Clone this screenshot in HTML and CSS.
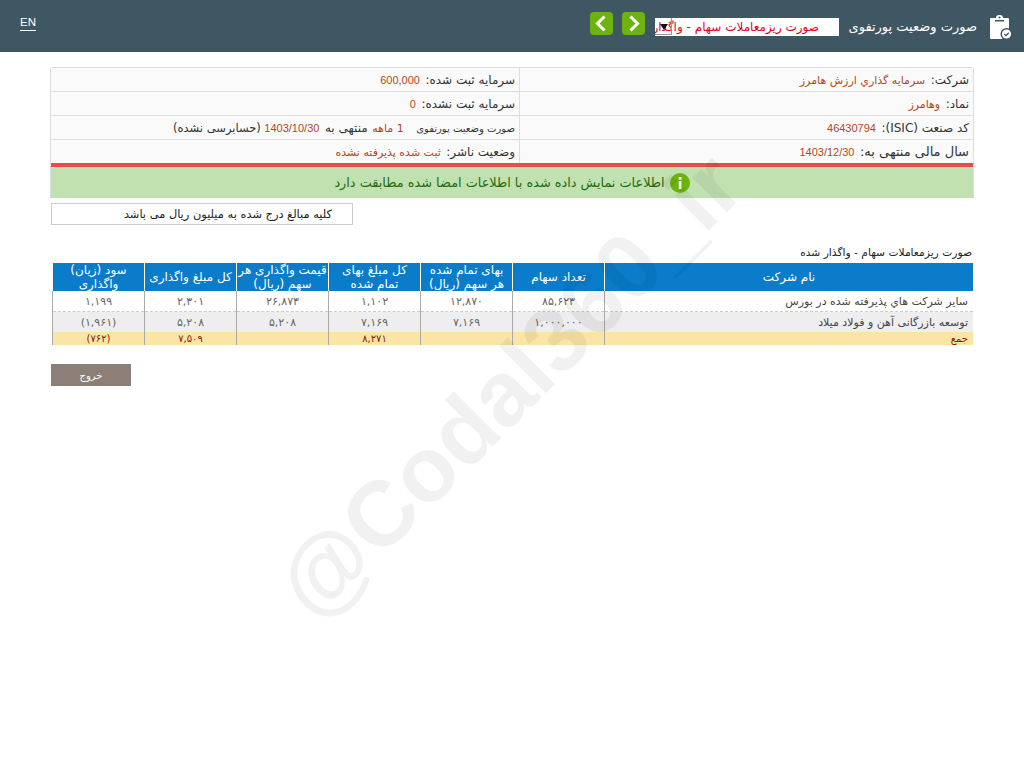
FILE: index.html
```html
<!DOCTYPE html>
<html lang="fa" dir="rtl">

<head>
    <meta charset="UTF-8">
    <title>صورت وضعیت پورتفوی</title>
    <link rel="stylesheet" href="styles.css">
</head>

<body>
    <header class="topbar">
        <svg class="report-icon" width="24" height="26" viewBox="0 0 24 26">
            <path fill="#fff" d="M2 4h5V3a3 3 0 0 1 3-2h1a3 3 0 0 1 3 2v1h5a1 1 0 0 1 1 1v19a1 1 0 0 1-1 1H2a1 1 0 0 1-1-1V5a1 1 0 0 1 1-1z"/>
            <rect x="6" y="6" width="9" height="1.5" fill="#3f5663"/>
            <circle cx="10.5" cy="3.5" r="1" fill="#3f5663"/>
            <circle cx="17.5" cy="20" r="6" fill="#3f5663"/>
            <circle cx="17.5" cy="20" r="4.6" fill="#fff"/>
            <path d="M15.4 20l1.6 1.6 2.8-2.9" fill="none" stroke="#3f5663" stroke-width="1.3"/>
        </svg>
        <span class="report-title">صورت وضعیت پورتفوی</span>
        <div class="report-select">
            <span class="report-select-text">صورت ریزمعاملات سهام - واگذار شده</span>
            <span class="report-select-arrow"></span>
        </div>
        <a class="nav-btn">
            <svg width="23" height="23" viewBox="0 0 23 23"><path d="M8.5 4.5l7 7-7 7" fill="none" stroke="#fff" stroke-width="3"/></svg>
        </a>
        <a class="nav-btn">
            <svg width="23" height="23" viewBox="0 0 23 23"><path d="M14.5 4.5l-7 7 7 7" fill="none" stroke="#fff" stroke-width="3"/></svg>
        </a>
        <a class="lang-link">EN</a>
    </header>

    <div class="watermark">@Codal360_ir</div>

    <main class="content">
        <section class="info-box">
            <div class="info-grid">
                <div class="info-cell"><span class="label">شرکت:</span> <span class="value">سرمایه گذاري ارزش هامرز</span></div>
                <div class="info-cell"><span class="label">سرمایه ثبت شده:</span> <span class="value latin">600,000</span></div>
                <div class="info-cell"><span class="label">نماد:</span> <span class="value">وهامرز</span></div>
                <div class="info-cell"><span class="label">سرمایه ثبت نشده:</span> <span class="value latin">0</span></div>
                <div class="info-cell"><span class="label">کد صنعت (ISIC):</span> <span class="value latin">46430794</span></div>
                <div class="info-cell"><span class="label-small">صورت وضعیت پورتفوی</span> <span class="value value-gap">1 ماهه</span> <span class="label">منتهی به</span> <span class="value latin">1403/10/30</span> <span class="label-audit">(حسابرسی نشده)</span></div>
                <div class="info-cell"><span class="label-wide">سال مالی منتهی به:</span> <span class="value latin">1403/12/30</span></div>
                <div class="info-cell"><span class="label">وضعیت ناشر:</span> <span class="value">ثبت شده پذیرفته نشده</span></div>
            </div>
            <div class="match-notice">
                <svg width="20" height="20" viewBox="0 0 20 20">
                    <circle cx="10" cy="10" r="10" fill="#6cb30f"/>
                    <rect x="8.8" y="8" width="2.6" height="8" fill="#fff"/>
                    <rect x="8.8" y="4" width="2.6" height="2.6" fill="#fff"/>
                </svg>
                <span>اطلاعات نمایش داده شده با اطلاعات امضا شده مطابقت دارد</span>
            </div>
        </section>

        <div class="unit-note">کلیه مبالغ درج شده به میلیون ریال می باشد</div>

        <h2 class="table-title">صورت ریزمعاملات سهام - واگذار شده</h2>

        <table class="deals">
            <thead>
                <tr>
                    <th class="col-name">نام شرکت</th>
                    <th>تعداد سهام</th>
                    <th>بهای تمام شده<br>هر سهم (ریال)</th>
                    <th>کل مبلغ بهای<br>تمام شده</th>
                    <th>قیمت واگذاری هر<br>سهم (ریال)</th>
                    <th>کل مبلغ واگذاری</th>
                    <th>سود (زیان)<br>واگذاری</th>
                </tr>
            </thead>
            <tbody>
                <tr class="row-plain">
                    <td class="name">سایر شرکت هاي پذیرفته شده در بورس</td>
                    <td>۸۵,۶۲۳</td>
                    <td>۱۲,۸۷۰</td>
                    <td>۱,۱۰۲</td>
                    <td>۲۶,۸۷۳</td>
                    <td>۲,۳۰۱</td>
                    <td>۱,۱۹۹</td>
                </tr>
                <tr class="row-alt">
                    <td class="name">توسعه بازرگانی آهن و فولاد میلاد</td>
                    <td>۱,۰۰۰,۰۰۰</td>
                    <td>۷,۱۶۹</td>
                    <td>۷,۱۶۹</td>
                    <td>۵,۲۰۸</td>
                    <td>۵,۲۰۸</td>
                    <td>(۱,۹۶۱)</td>
                </tr>
                <tr class="row-total">
                    <td class="name">جمع</td>
                    <td></td>
                    <td></td>
                    <td>۸,۲۷۱</td>
                    <td></td>
                    <td>۷,۵۰۹</td>
                    <td>(۷۶۲)</td>
                </tr>
            </tbody>
        </table>

        <div class="actions">
            <button class="exit-btn">خروج</button>
        </div>
    </main>
</body>

</html>
```

FILE: styles.css
```css
body {
    margin: 0;
    background: #fff;
    font-family: "DejaVu Sans", Tahoma, sans-serif;
    font-size: 11px;
    color: #333;
    overflow: hidden;
}

.topbar {
    display: flex;
    align-items: center;
    height: 52px;
    background: #3f5663;
    padding: 0 11px 0 20px;
    color: #fff;
}

.report-icon {
    margin-top: 2px;
    margin-left: 12px;
}

.report-title {
    font-size: 13px;
    margin-left: 11px;
    width: 127px;
    white-space: nowrap;
}

.report-select {
    position: relative;
    width: 184px;
    height: 18px;
    margin-top: 2px;
    background: #fff;
    overflow: hidden;
    margin-left: 10px;
}

.report-select-text {
    display: block;
    padding-right: 20px;
    line-height: 18px;
    font-size: 12px;
    color: #e0001b;
    white-space: nowrap;
}

.report-select-arrow {
    position: absolute;
    left: 0;
    top: 0;
    width: 16px;
    height: 16px;
    border-right: 1px solid #999;
    border-bottom: 1px solid #999;
}

.report-select-arrow::after {
    content: "";
    position: absolute;
    left: 5px;
    top: 6px;
    border: 4px solid transparent;
    border-top: 6px solid #111;
    border-bottom: 0;
}

.nav-btn {
    display: block;
    width: 23px;
    height: 23px;
    margin-top: -6px;
    background: #6cb30f;
    border-radius: 4px;
    margin-left: 9px;
}

.nav-btn svg {
    display: block;
}

.lang-link {
    margin-right: auto;
    margin-bottom: 6px;
    font-family: "Liberation Sans", Arial, sans-serif;
    font-size: 11.5px;
    color: #fff;
    border-bottom: 1px solid #fff;
    line-height: 15px;
}

/* sits on top of the page, it tints the boxes under it */
.watermark {
    position: absolute;
    left: 189px;
    top: 335px;
    width: 640px;
    text-align: center;
    direction: ltr;
    font-family: "Liberation Sans", Arial, sans-serif;
    font-size: 92px;
    font-weight: bold;
    line-height: 100px;
    color: rgba(0, 0, 0, 0.055);
    transform: rotate(-45deg);
    white-space: nowrap;
    pointer-events: none;
    z-index: 5;
}

.content {
    padding: 15px 50px 0 50px;
}

.info-box {
    border: 1px solid #ddd;
    border-bottom: 0;
    border-radius: 3px 3px 0 0;
}

.info-grid {
    display: grid;
    grid-template-columns: 454px 1fr;
    background: #fafafa;
}

.info-cell {
    height: 23px;
    line-height: 24px;
    padding-right: 4px;
    border-bottom: 1px solid #ddd;
    white-space: nowrap;
}

.info-cell:nth-child(odd) {
    border-left: 1px solid #ddd;
}

.info-cell:nth-last-child(-n+2) {
    border-bottom: 0;
}

.label {
    font-size: 12px;
}

.label-wide {
    font-size: 13px;
}

.label-small {
    font-size: 10px;
}

.label-audit {
    font-size: 11.5px;
}

.value {
    color: #b5471b;
    margin-right: 2px;
}

.value-gap {
    margin-right: 9px;
    margin-left: 1px;
}

.latin {
    font-family: "Liberation Sans", Arial, sans-serif;
    font-size: 11px;
}

.match-notice {
    display: flex;
    align-items: center;
    justify-content: center;
    gap: 5px;
    height: 31px;
    background: #c1e1b1;
    border-top: 4px solid #e74c4f;
    font-size: 12.85px;
    color: #1e6b10;
}

.unit-note {
    width: 280px;
    height: 20px;
    line-height: 20px;
    margin-top: 5px;
    margin-right: 621px;
    padding-right: 20px;
    border: 1px solid #ccc;
    font-size: 11.4px;
    color: #222;
}

.table-title {
    margin: 20px 2px 3px 0;
    font-size: 10.7px;
    font-weight: normal;
    line-height: 15px;
    color: #222;
}

.deals {
    width: 921px;
    margin-right: 1px;
    border-collapse: collapse;
    table-layout: fixed;
}

.deals th {
    width: 91px;
    height: 28px;
    padding: 0;
    background: #0a7cc9;
    border-left: 1px solid #fff;
    color: #fff;
    font-size: 12px;
    font-weight: normal;
    line-height: 14px;
}

.deals th.col-name {
    width: auto;
}

.deals td {
    height: 20px;
    padding: 0;
    text-align: center;
    border-left: 1px solid #aaa;
    color: #666;
    font-size: 11px;
}

.deals td.name {
    text-align: right;
    padding-right: 5px;
    color: #444;
}

.row-plain td {
    border-bottom: 1px dashed #ccc;
}

.row-alt td {
    background: #eee;
}

.deals .row-total td {
    height: 13px;
    line-height: 13px;
    background: #fae5a6;
    color: #8b1a00;
    font-size: 10px;
}

.actions {
    margin-top: 19px;
}

.exit-btn {
    display: block;
    width: 80px;
    height: 22px;
    margin-right: 843px;
    background: #8b7f78;
    border: none;
    color: #fff;
    font-family: inherit;
    font-size: 10px;
}
```
